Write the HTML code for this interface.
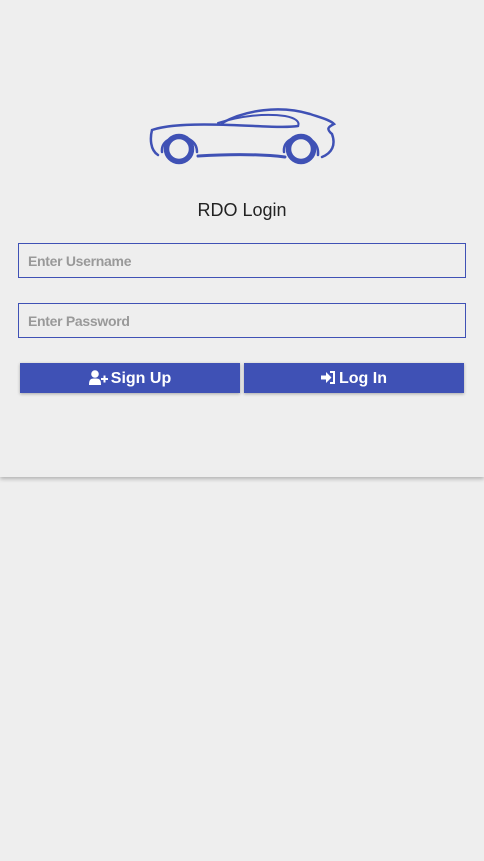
<!DOCTYPE html>
<html><head><style>
body{margin:0;background:#eeeeee;font-family:"Liberation Sans",sans-serif;width:484px;height:861px;overflow:hidden}
.card{position:absolute;left:0;top:0;width:484px;height:477px;background:#eeeeee;box-shadow:0 2px 4px rgba(0,0,0,.25)}
.title{position:absolute;top:200px;width:484px;text-align:center;font-size:18px;color:#222}
.inp{position:absolute;left:18px;width:446px;height:33px;border:1px solid #3f51b5;box-sizing:content-box}
.inp span{position:absolute;left:9px;top:9px;font-size:14px;font-weight:bold;color:#999;letter-spacing:-0.3px}
.btn{position:absolute;top:363px;width:220px;height:30px;background:#3f51b5;color:#fff;font-size:16px;font-weight:bold;text-align:center;line-height:31px;box-shadow:0 1px 3px rgba(0,0,0,.3)}
.btn svg{vertical-align:-2px;margin-right:3px}
</style></head><body>
<div class="card">
<svg style="position:absolute;left:0;top:0" width="484" height="200" fill="none" stroke="#3f51b5" stroke-linecap="round">
<path d="M158 155 C150 150 150 138 152 130 C170 124 200 124 230 125 C260 126 285 128 298 126" stroke-width="2.5"/>
<path d="M298 126 C300 122 296 118 285 116 C265 113 240 116 218 123" stroke-width="2"/>
<path d="M222 123 C245 110 280 105 310 114 C322 118 330 120 334 124 C328 127 326 129 332 134 C336 145 332 153 322 157" stroke-width="2.5"/>
<path d="M198 156 C230 154 260 154 285 157" stroke-width="3"/>
<path d="M162 152 C160 133 197 131 197 152" stroke-width="2.5"/>
<path d="M284 152 C282 132 320 131 318 155" stroke-width="2.5"/>
<circle cx="179" cy="149" r="12.5" stroke-width="5.5"/>
<circle cx="301" cy="149" r="12.5" stroke-width="5.5"/>
</svg>
<div class="title">RDO Login</div>
<div class="inp" style="top:243px"><span>Enter Username</span></div>
<div class="inp" style="top:303px"><span>Enter Password</span></div>
<div class="btn" style="left:20px"><svg width="19" height="15" viewBox="0 0 19 15" fill="#fff"><circle cx="6" cy="4" r="3.8"/><path d="M0 15 C0 9 2 8.5 6 8.5 C10 8.5 12 9 12 15Z"/><path d="M12 8h7v2h-7zM14.5 5.5h2v7h-2z"/></svg>Sign Up</div>
<div class="btn" style="left:244px"><svg width="15" height="15" viewBox="0 0 15 15" fill="#fff"><path d="M0 5.5h5V2l5.5 5.5L5 13V9.5H0z"/><path d="M9 1h5v13H9v-2h3V3H9z"/></svg>Log In</div>
</div>
</body></html>
